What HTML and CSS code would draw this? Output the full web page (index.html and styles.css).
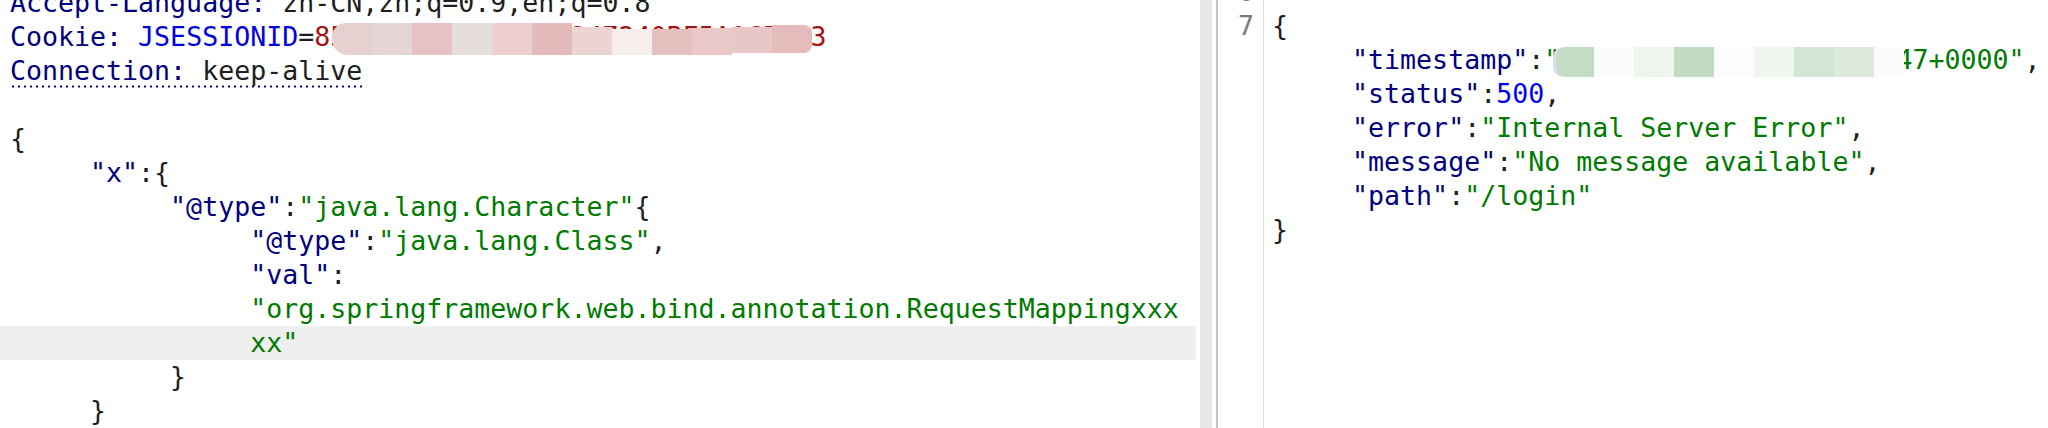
FILE: index.html
```html
<!DOCTYPE html>
<html>
<head>
<meta charset="utf-8">
<link rel="stylesheet" href="styles.css">
</head>
<body>
<div class="left">
  <div class="code">
    <div class="line"><span class="hk">Accept-Language:</span> zh-CN,zh;q=0.9,en;q=0.8</div>
    <div class="line"><span class="hk">Cookie:</span> <span class="ck">JSESSIONID</span>=<span class="cv">85D2E9C1A0F6B3D1247240BF5A0CE913</span><span class="blur pink"><i class="b1"></i><i class="b2"></i><i class="b3"></i><i class="b4"></i><i class="b5"></i><i class="b6"></i><i class="b7"></i><i class="b8"></i><i class="b9"></i><i class="b10"></i><i class="b11"></i><i class="b12"></i></span></div>
    <div class="line"><span class="dotted"><span class="hk">Connection:</span> keep-alive</span></div>
    <div class="line"> </div>
    <div class="line">{</div>
    <div class="line">     <span class="k">"x"</span>:{</div>
    <div class="line">          <span class="k">"@type"</span>:<span class="s">"java.lang.Character"</span>{</div>
    <div class="line">               <span class="k">"@type"</span>:<span class="s">"java.lang.Class"</span>,</div>
    <div class="line">               <span class="k">"val"</span>:</div>
    <div class="line">               <span class="s">"org.springframework.web.bind.annotation.RequestMappingxxx</span></div>
    <div class="line hl">               <span class="s">xx"</span></div>
    <div class="line">          }</div>
    <div class="line">     }</div>
  </div>
</div>
<div class="track"></div>
<div class="gap"></div>
<div class="divider"></div>
<div class="right">
  <div class="gutter">
    <div class="num">6</div>
    <div class="num">7</div>
  </div>
  <div class="rcode">
    <div class="line"> </div>
    <div class="line">{</div>
    <div class="line">     <span class="k">"timestamp"</span>:<span class="s">"2021-03-30T06:49:47.847+0000"</span>,<span class="blur green"><i class="g1"></i><i class="g2"></i><i class="g3"></i><i class="g4"></i><i class="g5"></i><i class="g6"></i><i class="g7"></i><i class="g8"></i><i class="g9"></i></span></div>
    <div class="line">     <span class="k">"status"</span>:<span class="n">500</span>,</div>
    <div class="line">     <span class="k">"error"</span>:<span class="s">"Internal Server Error"</span>,</div>
    <div class="line">     <span class="k">"message"</span>:<span class="s">"No message available"</span>,</div>
    <div class="line">     <span class="k">"path"</span>:<span class="s">"/login"</span></div>
    <div class="line">}</div>
  </div>
</div>
</body>
</html>
```
FILE: styles.css
```css
html, body {
  margin: 0;
  padding: 0;
  background: #ffffff;
}
body {
  width: 2048px;
  height: 428px;
  overflow: hidden;
  display: flex;
  font-family: "DejaVu Sans Mono", "Liberation Mono", monospace;
  font-size: 26.6px;
  line-height: 34px;
  color: #1e1e1e;
}
.left {
  width: 1200px;
  flex: none;
  overflow: hidden;
}
.code {
  margin-top: -14px;
}
.line {
  height: 34px;
  white-space: pre;
  position: relative;
}
.left .line {
  padding-left: 10px;
}
.line.hl {
  background: #efefef;
  margin-right: 4px;
}
.hk, .k { color: #000080; }
.ck { color: #0000e0; }
.cv { color: #a31515; }
.s { color: #007a00; }
.n { color: #0000ff; }
.dotted {
  display: inline-block;
  height: 34px;
  background-image: radial-gradient(circle, #000080 0.9px, transparent 1.3px);
  background-size: 6px 3px;
  background-repeat: repeat-x;
  background-position: 0 31px;
}
.track {
  width: 12px;
  flex: none;
  background: #e6e6e6;
}
.gap {
  width: 4px;
  flex: none;
}
.divider {
  width: 2px;
  flex: none;
  background: #cbc3c3;
}
.right {
  flex: 1;
  display: flex;
}
.gutter {
  width: 46px;
  flex: none;
  box-sizing: border-box;
  border-right: 1px solid #dcdcdc;
  padding-right: 9px;
  text-align: right;
  color: #7a7a7a;
  margin-top: -25px;
}
.num {
  height: 34px;
}
.rcode {
  flex: 1;
  padding-left: 8px;
  margin-top: -25px;
}
.blur {
  position: absolute;
  display: flex;
  align-items: flex-start;
}
.blur i {
  display: block;
  width: 40px;
}
.blur.pink {
  left: 332px;
  top: 3px;
  height: 32px;
  border-radius: 14px 4px 4px 16px;
  overflow: hidden;
}
.blur.pink i { height: 32px; }
.b1 { background: #e7d0d0; border-radius: 10px 0 0 12px; }
.b2 { background: #e6d5d5; }
.b3 { background: #e8c2c2; }
.b4 { background: #e6dddd; }
.b5 { background: #edcfcf; }
.b6 { background: #e4bbbb; }
.b7 { background: #eed3d3; margin-top: 4px; }
.b8 { background: #f6eded; margin-top: 6px; }
.b9 { background: #e6bfbf; margin-top: 6px; }
.b10 { background: #ebc8c8; margin-top: 5px; }
.b11 { background: #eac7c7; margin-top: 4px; height: 26px !important; }
.b12 { background: #e5bcbc; width: 40px !important; margin-top: 2px; height: 28px !important; border-radius: 0 8px 8px 0; }
.blur.green {
  left: 284px;
  top: 4px;
  height: 30px;
}
.blur.green i { height: 30px; }
.g1 { background: #c4dcc4; width: 38px !important; border-radius: 10px 0 0 10px; box-shadow: -3px 0 0 #dcdcef; }
.g2 { background: #fafcfa; }
.g3 { background: #eef5ee; }
.g4 { background: #c2dcc2; }
.g5 { background: #fbfcfb; }
.g6 { background: #eff6ef; }
.g7 { background: #d3e6d3; }
.g8 { background: #dcebdc; }
.g9 { background: #fbfbfb; width: 30px !important; }
```
